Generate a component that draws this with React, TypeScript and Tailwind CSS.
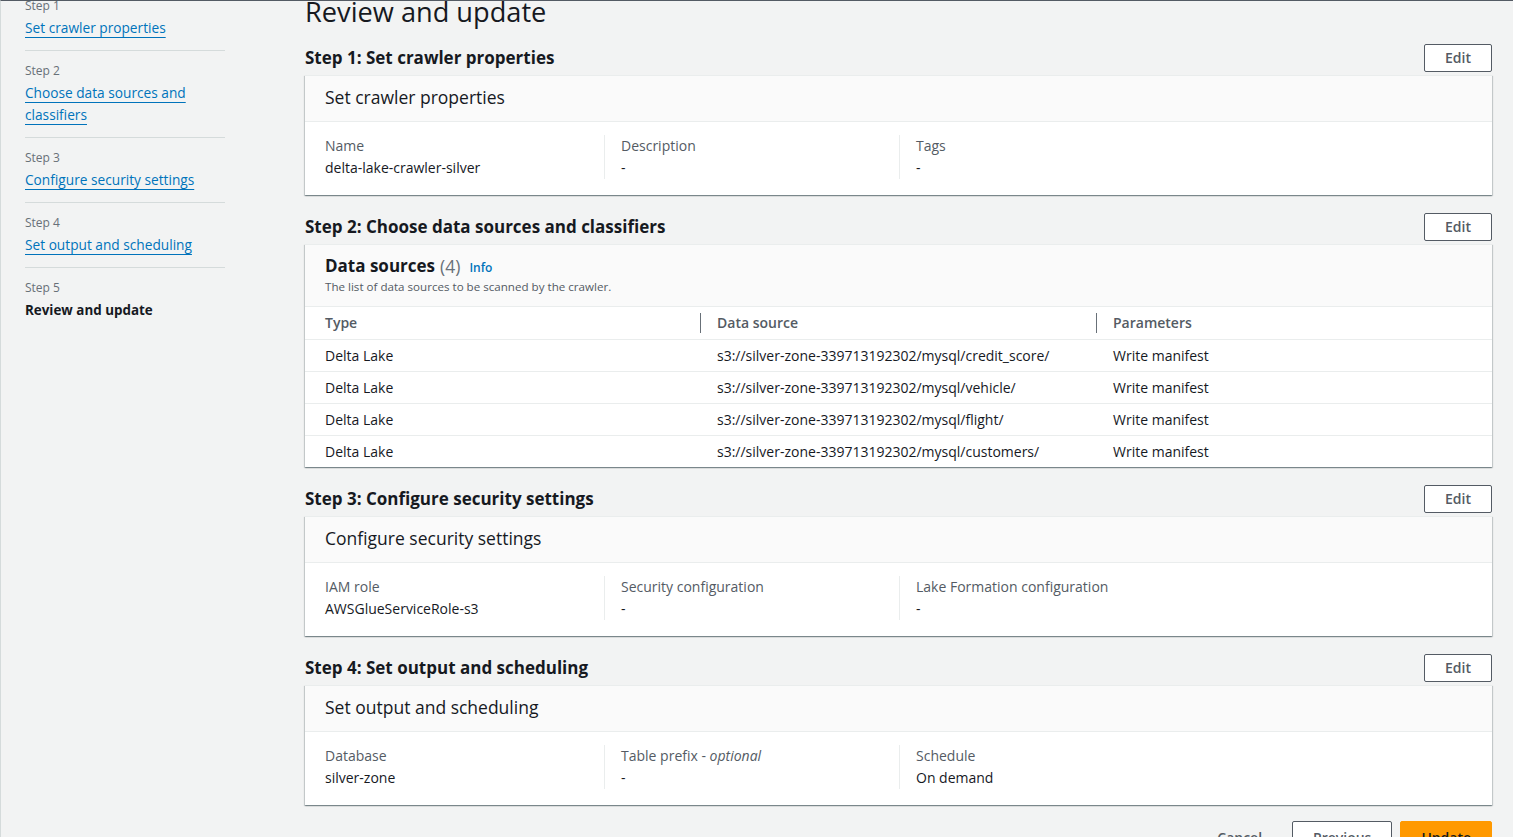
const steps = [
  { label: 'Step 1', title: 'Set crawler properties' },
  { label: 'Step 2', title: 'Choose data sources and classifiers' },
  { label: 'Step 3', title: 'Configure security settings' },
  { label: 'Step 4', title: 'Set output and scheduling' },
];

const sources = [
  's3://silver-zone-339713192302/mysql/credit_score/',
  's3://silver-zone-339713192302/mysql/vehicle/',
  's3://silver-zone-339713192302/mysql/flight/',
  's3://silver-zone-339713192302/mysql/customers/',
];

type Field = { label: React.ReactNode; value: string };

const cardShadow =
  'shadow-[0_1px_1px_0_rgba(0,28,36,0.3),1px_1px_1px_0_rgba(0,28,36,0.15),-1px_1px_1px_0_rgba(0,28,36,0.15)]';

const EditButton = () => (
  <button className="h-[28px] px-[20px] border border-[#545b64] rounded-[2px] bg-white text-[14px] font-semibold text-[#545b64] leading-none">
    Edit
  </button>
);

const Section = ({ title, children }: { title: string; children: React.ReactNode }) => (
  <div className="mb-[18px]">
    <div className="flex items-center justify-between h-[28px]">
      <h2 className="text-[17px] font-bold text-[#16191f] leading-[22px] -mt-[1px]">{title}</h2>
      <EditButton />
    </div>
    <div className={`mt-[3px] bg-white border-t border-[#eaeded] ${cardShadow}`}>{children}</div>
  </div>
);

const KeyValueCard = ({ header, fields }: { header: string; fields: Field[] }) => (
  <>
    <div className="h-[46px] flex items-center px-[20px] pb-[4px] bg-[#fafafa] border-b border-[#eaeded]">
      <span className="text-[17.5px] text-[#16191f] leading-[22px]">{header}</span>
    </div>
    <div className="flex px-[20px] pt-[13px] pb-[16px] text-[14px] leading-[22px]">
      {fields.map((f, i) => (
        <div
          key={i}
          className={
            i === 0
              ? 'w-[279px] shrink-0'
              : i === 1
              ? 'w-[295px] shrink-0 border-l border-[#eaeded] pl-[16px]'
              : 'flex-1 border-l border-[#eaeded] pl-[16px]'
          }
        >
          <div className="text-[#545b64]">{f.label}</div>
          <div className="text-[#16191f]">{f.value}</div>
        </div>
      ))}
    </div>
  </>
);

const App = () => {
  return (
    <div
      className="h-[837px] w-full overflow-hidden bg-[#f2f3f3] border-t border-[#545b64] border-l border-l-[#d5dbdb]"
      style={{ fontFamily: '"Open Sans", "Noto Sans", Arial, sans-serif' }}
    >
      <div className="flex -mt-[16px]">
        {/* wizard navigation */}
        <nav className="w-[200px] ml-[24px] pt-[1px] shrink-0">
          {steps.map((s, i) => (
            <div key={i} className="pt-[12px] pb-[11px] border-b border-[#d5dbdb]">
              <div className="text-[12px] leading-[16px] text-[#687078]">{s.label}</div>
              <div className="mt-[3px] text-[13.7px] leading-[22px]">
                <a className="text-[#0073bb] underline decoration-[#0073bb] underline-offset-[4px]">{s.title}</a>
              </div>
            </div>
          ))}
          <div className="pt-[12px]">
            <div className="text-[12px] leading-[16px] text-[#687078]">Step 5</div>
            <div className="mt-[3px] text-[13.4px] leading-[22px] font-bold text-[#16191f]">Review and update</div>
          </div>
        </nav>

        <main className="ml-[80px] mr-[21px] flex-1 pt-[9px]">
          <h1 className="text-[27.2px] leading-[36px] text-[#16191f] mb-[14px]">Review and update</h1>

          <Section title="Step 1: Set crawler properties">
            <KeyValueCard
              header="Set crawler properties"
              fields={[
                { label: 'Name', value: 'delta-lake-crawler-silver' },
                { label: 'Description', value: '-' },
                { label: 'Tags', value: '-' },
              ]}
            />
          </Section>

          <Section title="Step 2: Choose data sources and classifiers">
            <div className="h-[62px] flex flex-col justify-center px-[20px] bg-[#fafafa] border-b border-[#eaeded]">
              <div className="flex items-center h-[22px] -mt-[1px]">
                <span className="text-[17px] font-bold text-[#16191f] leading-[22px]">Data sources</span>
                <span className="text-[17.5px] text-[#687078] ml-[5px] leading-[22px]">(4)</span>
                <span className="text-[12px] font-semibold text-[#0073bb] ml-[9px] leading-[16px] mt-[3px]">Info</span>
              </div>
              <div className="mt-[2px] text-[11.6px] leading-[16px] text-[#545b64]">
                The list of data sources to be scanned by the crawler.
              </div>
            </div>
            <table className="w-full text-[14px] border-collapse">
              <thead>
                <tr className="h-[32px] border-b border-[#eaeded] text-left text-[#545b64]">
                  <th className="w-[395px] pl-[20px] font-semibold">Type</th>
                  <th className="w-[396px] font-semibold p-0">
                    <div className="border-l border-[#687078] pl-[16px] leading-[20px]">Data source</div>
                  </th>
                  <th className="font-semibold p-0">
                    <div className="border-l border-[#687078] pl-[16px] leading-[20px]">Parameters</div>
                  </th>
                </tr>
              </thead>
              <tbody className="text-[#16191f]">
                {sources.map((src, i) => (
                  <tr key={i} className={`h-[32px] ${i < sources.length - 1 ? 'border-b border-[#eaeded]' : ''}`}>
                    <td className="pl-[20px]">Delta Lake</td>
                    <td className="pl-[17px]">{src}</td>
                    <td className="pl-[17px]">Write manifest</td>
                  </tr>
                ))}
              </tbody>
            </table>
          </Section>

          <Section title="Step 3: Configure security settings">
            <KeyValueCard
              header="Configure security settings"
              fields={[
                { label: 'IAM role', value: 'AWSGlueServiceRole-s3' },
                { label: 'Security configuration', value: '-' },
                { label: 'Lake Formation configuration', value: '-' },
              ]}
            />
          </Section>

          <Section title="Step 4: Set output and scheduling">
            <KeyValueCard
              header="Set output and scheduling"
              fields={[
                { label: 'Database', value: 'silver-zone' },
                {
                  label: (
                    <>
                      Table prefix - <i>optional</i>
                    </>
                  ),
                  value: '-',
                },
                { label: 'Schedule', value: 'On demand' },
              ]}
            />
          </Section>

          <div className="flex justify-end items-center -mt-[2px] gap-[8px]">
            <button className="h-[32px] px-[22px] text-[14px] font-semibold text-[#545b64]">Cancel</button>
            <button className="h-[32px] px-[20px] border border-[#545b64] rounded-[2px] bg-white text-[14px] font-semibold text-[#545b64]">
              Previous
            </button>
            <button className="h-[32px] px-[20px] border border-[#ff9900] rounded-[2px] bg-[#ff9900] text-[14px] font-semibold text-[#16191f]">
              Update
            </button>
          </div>
        </main>
      </div>
    </div>
  );
};

export default App;
